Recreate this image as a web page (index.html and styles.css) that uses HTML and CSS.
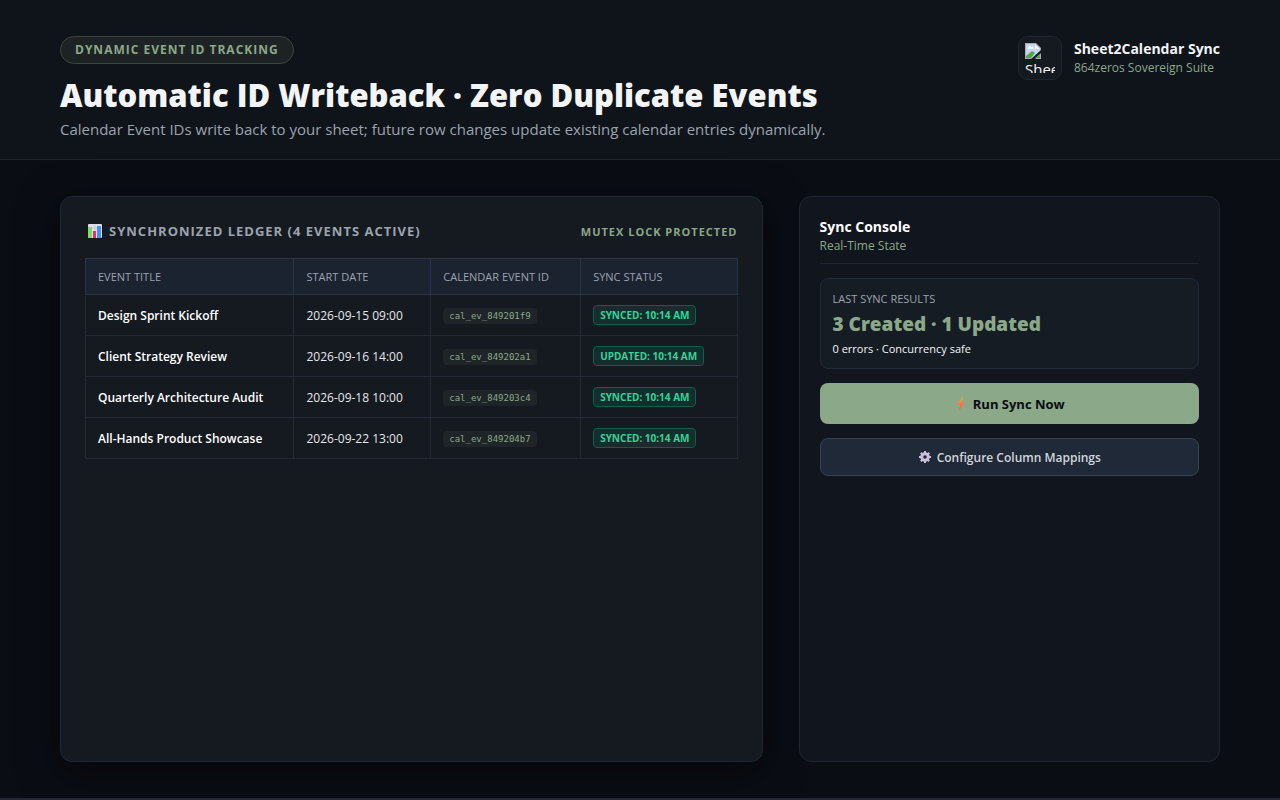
FILE: index.html
```
<!DOCTYPE html>
<html lang="en">
<head>
  <meta charset="UTF-8">
  <meta name="viewport" content="width=device-width, initial-scale=1.0">
  <title>Sheet2Calendar Sync</title>
  <link rel="stylesheet" href="styles.css">
</head>
<body>
  <header class="header">
    <div class="headline">
      <span class="badge">DYNAMIC EVENT ID TRACKING</span>
      <h1>Automatic ID Writeback · Zero Duplicate Events</h1>
      <p class="subtitle">Calendar Event IDs write back to your sheet; future row changes update existing calendar entries dynamically.</p>
    </div>
    <div class="brand">
      <div class="brand-logo">
        <div class="logo-fallback">
          <svg viewBox="0 0 16 16" width="16" height="16">
            <path d="M0 0h11l5 5v11H0z" fill="#a9abae"/>
            <path d="M1 1h9.500l4.500 4.500V15H1z" fill="#c3d6f6"/>
            <path d="M3 5.500a2 2 0 0 1 3.500-1.500 1.500 1.500 0 0 1 2 2H3z" fill="#fff"/>
            <path d="M1 15v-2l6-5 3 2-4 5z" fill="#4fa83b"/>
            <path d="M10 1v5h5z" fill="#eef0f2"/>
            <path d="M16 7v3l-6 6H6z" fill="#151920"/>
            <path d="M10 15l5-4v4z" fill="#4fa83b"/>
          </svg>
          <span>Shee</span>
        </div>
      </div>
      <div>
        <div class="brand-name">Sheet2Calendar Sync</div>
        <div class="brand-suite">864zeros Sovereign Suite</div>
      </div>
    </div>
  </header>

  <main class="main">
    <section class="ledger">
      <div class="ledger-head">
        <h2>
          <svg viewBox="0 0 16 16" width="16" height="16">
            <rect x="1" y="1" width="14" height="14" rx="1" fill="#e4dced"/>
            <path d="M1 5h14M1 9h14M8 1v14" stroke="#c8bdd4" stroke-width="0.6"/>
            <rect x="1" y="4" width="4" height="11" fill="#7ddc6c"/>
            <rect x="6" y="8" width="3" height="7" fill="#e0346c"/>
            <rect x="10" y="3" width="4" height="12" fill="#3f97e8"/>
          </svg>
          SYNCHRONIZED LEDGER (4 EVENTS ACTIVE)
        </h2>
        <span class="lock">MUTEX LOCK PROTECTED</span>
      </div>
      <table>
        <thead>
          <tr>
            <th class="col-title">EVENT TITLE</th>
            <th class="col-date">START DATE</th>
            <th class="col-id">CALENDAR EVENT ID</th>
            <th>SYNC STATUS</th>
          </tr>
        </thead>
        <tbody>
          <tr>
            <td class="event">Design Sprint Kickoff</td>
            <td>2026-09-15 09:00</td>
            <td><code>cal_ev_849201f9</code></td>
            <td><span class="status">SYNCED: 10:14 AM</span></td>
          </tr>
          <tr>
            <td class="event">Client Strategy Review</td>
            <td>2026-09-16 14:00</td>
            <td><code>cal_ev_849202a1</code></td>
            <td><span class="status">UPDATED: 10:14 AM</span></td>
          </tr>
          <tr>
            <td class="event">Quarterly Architecture Audit</td>
            <td>2026-09-18 10:00</td>
            <td><code>cal_ev_849203c4</code></td>
            <td><span class="status">SYNCED: 10:14 AM</span></td>
          </tr>
          <tr>
            <td class="event">All-Hands Product Showcase</td>
            <td>2026-09-22 13:00</td>
            <td><code>cal_ev_849204b7</code></td>
            <td><span class="status">SYNCED: 10:14 AM</span></td>
          </tr>
        </tbody>
      </table>
    </section>

    <aside class="console">
      <div class="console-head">
        <h2>Sync Console</h2>
        <p>Real-Time State</p>
      </div>
      <div class="results">
        <div class="results-label">LAST SYNC RESULTS</div>
        <div class="results-value">3 Created · 1 Updated</div>
        <div class="results-note">0 errors · Concurrency safe</div>
      </div>
      <button type="button" class="btn btn-primary">
        <svg viewBox="0 0 14 14" width="14" height="14">
          <defs>
            <linearGradient id="bolt" x1="0" y1="0" x2="0" y2="1">
              <stop offset="0" stop-color="#ffa530"/>
              <stop offset="1" stop-color="#fb4a5e"/>
            </linearGradient>
          </defs>
          <path d="M8 0.500L3 8h3.200L5 13.500 11 5.500H7.800L9 0.500z" fill="url(#bolt)"/>
        </svg>
        Run Sync Now
      </button>
      <button type="button" class="btn btn-secondary">
        <svg viewBox="0 0 14 14" width="14" height="14">
          <circle cx="7" cy="7" r="3.300" fill="none" stroke="#cdbfda" stroke-width="3"/>
          <path d="M7 1v2.500M7 10.500V13M1 7h2.500M10.500 7H13M2.800 2.800l1.700 1.700M9.500 9.500l1.700 1.700M11.200 2.800L9.500 4.500M4.500 9.500l-1.700 1.700" stroke="#cdbfda" stroke-width="2"/>
        </svg>
        Configure Column Mappings
      </button>
    </aside>
  </main>
</body>
</html>
```

FILE: styles.css
```
*, *::before, *::after { box-sizing: border-box; }
body {
  margin: 0;
  min-height: 100vh;
  display: flex;
  flex-direction: column;
  background-color: #0a0d14;
  color: #f3f4f6;
  font-family: "Segoe UI", "Open Sans", "Noto Sans", sans-serif;
  border-bottom: 2px solid #1f2937;
}
h1, h2, p { margin: 0; }

/* Header */
.header {
  display: flex;
  justify-content: space-between;
  align-items: flex-start;
  padding: 36px 60px 18px;
  background-color: #0f131a;
  border-bottom: 1px solid #1f2533;
}
.headline { display: flex; flex-direction: column; align-items: flex-start; }
.badge {
  padding: 4px 14px;
  border: 1px solid #3c473f;
  border-radius: 999px;
  background-color: #1d2225;
  color: #8ba888;
  font-size: 12px;
  line-height: 18px;
  font-weight: 700;
  letter-spacing: 1px;
  margin-bottom: 10px;
}
h1 { font-size: 31px; line-height: 42px; font-weight: 800; }
.subtitle { margin-top: 2px; font-size: 15px; line-height: 23px; color: #9ca3af; }

.brand { display: flex; align-items: center; gap: 12px; }
.brand-logo { width: 44px; height: 44px; padding: 6px; border: 1px solid #1f2533; border-radius: 10px; background-color: #151920; }
.logo-fallback { height: 30px; overflow: hidden; font-size: 15px; line-height: 20px; }
.logo-fallback svg { display: block; }
.brand-name { font-size: 14px; line-height: 20px; font-weight: 700; }
.brand-suite { font-size: 12px; line-height: 18px; color: #8ba888; }

/* Layout */
.main { flex: 1; display: grid; grid-template-columns: 5fr 3fr; gap: 36px; padding: 36px 60px; }

/* Ledger */
.ledger {
  padding: 24px;
  border: 1px solid #1f2937;
  border-radius: 12px;
  background-color: #151920;
  box-shadow: 0 10px 40px rgba(0, 0, 0, 0.5);
}
.ledger-head { display: flex; justify-content: space-between; align-items: center; margin-bottom: 17px; letter-spacing: 1px; }
.ledger-head h2 { display: flex; align-items: center; gap: 6px; padding-left: 2px; font-size: 13px; line-height: 20px; font-weight: 700; color: #9ca3af; }
.lock { font-size: 11px; font-weight: 700; color: #8ba888; }

table { width: 100%; border-collapse: collapse; table-layout: fixed; }
th, td { padding: 0 12px; border: 1px solid #232936; text-align: left; font-size: 12px; }
th { height: 36px; border-color: #273449; background-color: #1b2230; color: #9ca3af; font-size: 11px; font-weight: 400; }
td { height: 41px; color: #e5e7eb; }
.col-title { width: 32%; }
.col-date { width: 21%; }
.col-id { width: 23%; }
.event { color: #fff; font-weight: 600; }
code {
  display: inline-block;
  padding: 1px 6px;
  border-radius: 4px;
  background-color: #1e2427;
  color: #8ba888;
  font-family: Consolas, "DejaVu Sans Mono", monospace;
  font-size: 9px;
  line-height: 14px;
}
.status {
  display: inline-block;
  padding: 2px 6px;
  border: 1px solid #0f5f49;
  border-radius: 4px;
  background-color: #142d2d;
  color: #34d399;
  font-size: 10px;
  line-height: 14px;
  font-weight: 700;
}

/* Console */
.console {
  display: flex;
  flex-direction: column;
  gap: 14px;
  padding: 20px;
  border: 1px solid #1f2533;
  border-radius: 12px;
  background-color: #11151e;
}
.console-head { padding-bottom: 8px; border-bottom: 1px solid #1f2533; }
.console-head h2 { font-size: 14px; line-height: 20px; font-weight: 700; color: #fff; }
.console-head p { font-size: 12px; line-height: 18px; color: #8ba888; }
.results { padding: 12px; border: 1px solid #1f2937; border-radius: 8px; background-color: #161c24; }
.results-label { font-size: 11px; line-height: 16px; color: #9ca3af; }
.results-value { margin: 4px 0; font-size: 19px; line-height: 26px; font-weight: 800; color: #8ba888; }
.results-note { font-size: 11px; line-height: 15px; }

.btn { display: flex; justify-content: center; align-items: center; gap: 5px; border-radius: 8px; font-family: inherit; cursor: pointer; }
.btn-primary { height: 41px; border: none; background-color: #8ba888; color: #0a0d14; font-size: 13px; font-weight: 700; }
.btn-secondary { height: 38px; border: 1px solid #374151; background-color: #1f2937; color: #d1d5db; font-size: 12px; font-weight: 600; }

@media (max-width: 900px) {
  .main { grid-template-columns: 1fr; }
  .header { flex-direction: column; gap: 20px; }
}
```
